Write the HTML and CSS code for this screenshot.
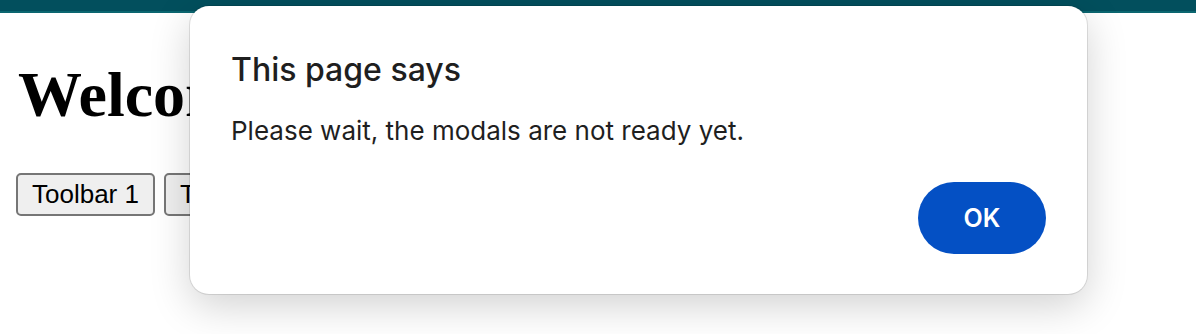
FILE: index.html
```html
<!DOCTYPE html>
<html lang="en">
<head>
    <meta charset="UTF-8">
    <meta name="viewport" content="width=device-width, initial-scale=1.0">
    <title>Welcome</title>
    <link rel="stylesheet" href="styles.css">
</head>
<body>
    <div class="topbar"></div>

    <div class="page">
        <h1>Welcome</h1>

        <div class="toolbars">
            <button class="tb-btn">Toolbar 1</button>
            <button class="tb-btn">Toolbar 2</button>
            <button class="tb-btn">Toolbar 3</button>
        </div>
    </div>

    <!-- alert dialog -->
    <div class="dialog">
        <div class="dialog-title">This page says</div>
        <div class="dialog-text">Please wait, the modals are not ready yet.</div>
        <div class="dialog-actions">
            <button class="ok-btn">OK</button>
        </div>
    </div>
</body>
</html>
```

FILE: styles.css
```css
* {
    margin: 0;
    padding: 0;
    box-sizing: border-box;
}

body {
    font-family: "Liberation Serif", serif;
    background: white;
    overflow: hidden;
}

.topbar {
    height: 13px;
    background: #024f5d;
    border-bottom: 2px solid #0b6670;
}

.page {
    padding: 45px 16px 0 16px;
}

h1 {
    font-size: 64px;
    line-height: 74px;
    font-weight: bold;
    color: black;
    padding-left: 2px;
}

.toolbars {
    display: flex;
    gap: 9px;
    margin-top: 41px;
}

.tb-btn {
    font-family: "Liberation Sans", Arial, sans-serif;
    font-size: 26px;
    height: 43px;
    padding: 0 14px;
    background: #efefef;
    color: black;
    border: 2px solid #767676;
    border-radius: 5px;
}

.dialog {
    position: absolute;
    left: 190px;
    top: 6px;
    width: 897px;
    height: 288px;
    background: white;
    border-radius: 19px;
    box-shadow: 0 0 0 1px rgba(0, 0, 0, 0.1), 0 12px 40px rgba(0, 0, 0, 0.18);
    padding: 45px 41px 0 41px;
    display: flex;
    flex-direction: column;
    font-family: Inter, "Noto Sans", sans-serif;
    color: #1f1f1f;
}

.dialog-title {
    font-size: 32px;
    line-height: 38px;
    font-weight: 500;
}

.dialog-text {
    font-size: 26px;
    line-height: 32px;
    margin-top: 26px;
}

.dialog-actions {
    display: flex;
    justify-content: flex-end;
    margin-top: 35px;
}

.ok-btn {
    width: 128px;
    height: 72px;
    border: none;
    border-radius: 36px;
    background: #0450c4;
    color: white;
    font-family: Inter, "Noto Sans", sans-serif;
    font-size: 25px;
    font-weight: 600;
}
```
